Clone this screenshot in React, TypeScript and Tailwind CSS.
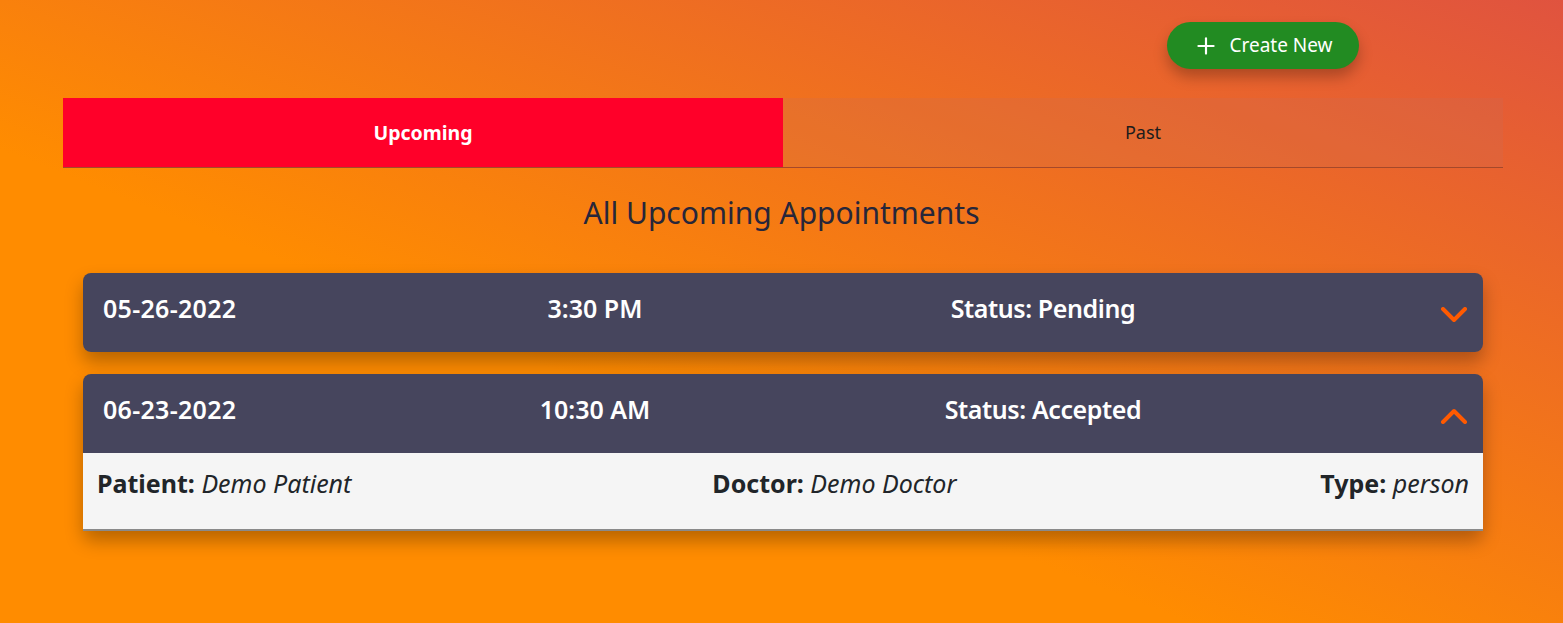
import { Plus } from "lucide-react";

type Appt = {
  date: string;
  time: string;
  status: string;
  open: boolean;
};

const appts: Appt[] = [
  { date: "05-26-2022", time: "3:30 PM", status: "Pending", open: false },
  { date: "06-23-2022", time: "10:30 AM", status: "Accepted", open: true },
];

const Chevron = ({ up }: { up: boolean }) => (
  <svg width="28" height="16" viewBox="0 0 28 16" fill="none">
    <path
      d={up ? "M3 14 L14 3 L25 14" : "M3 2 L14 13 L25 2"}
      stroke="#ff5a00"
      strokeWidth="4"
      strokeLinecap="round"
      strokeLinejoin="round"
    />
  </svg>
);

const ApptCard = ({ appt }: { appt: Appt }) => (
  <div className="rounded-lg shadow-[0_10px_18px_rgba(0,0,0,0.28)]">
    <div
      className={`grid h-[79px] grid-cols-[328px_328px_568px_1fr] items-center bg-[#46455d] pb-2 pl-5 text-[25px] font-semibold text-white ${
        appt.open ? "rounded-t-lg" : "rounded-lg"
      }`}
    >
      <div className="tracking-[0.3px]">{appt.date}</div>
      <div className="text-center">{appt.time}</div>
      <div className="text-center tracking-[-0.4px]">Status: {appt.status}</div>
      <div className="flex justify-end pr-[15px] pt-3">
        <Chevron up={appt.open} />
      </div>
    </div>
    {appt.open && (
      <div className="grid h-[78px] grid-cols-3 items-start border-b-2 border-[#8a8a8a] bg-[#f5f5f5] px-[14px] pt-[12px] text-[25px] text-[#212529]">
        <div>
          <span className="font-bold">Patient:</span> <i>Demo Patient</i>
        </div>
        <div className="pl-[158px]">
          <span className="font-bold">Doctor:</span> <i>Demo Doctor</i>
        </div>
        <div className="text-right">
          <span className="font-bold">Type:</span> <i>person</i>
        </div>
      </div>
    )}
  </div>
);

export default function App() {
  return (
    <div className="h-[623px] w-full overflow-hidden bg-[linear-gradient(to_top_right,#ff8c00_38%,#e0533f_100%)] font-['Noto_Sans',sans-serif]">
      <div className="flex justify-end pr-[204px] pt-[22px]">
        <button className="flex h-[47px] w-[192px] items-center justify-center gap-[10px] rounded-full bg-[#228b22] text-[19px] text-white shadow-[0_8px_14px_rgba(0,0,0,0.25)]">
          <Plus size={26} strokeWidth={2} />
          <span>Create New</span>
        </button>
      </div>

      <div className="ml-[63px] mt-[29px] grid h-[70px] w-[1440px] grid-cols-2 border-b border-[#a5482a]">
        <div className="flex items-center justify-center bg-[#ff0029] text-[19.5px] font-bold text-white">
          Upcoming
        </div>
        <div className="flex items-center justify-center bg-[rgba(200,110,90,0.22)] text-[18px] text-[#1c1c1c]">
          Past
        </div>
      </div>

      <h2 className="mt-[22px] text-center text-[30px] text-[#27263a]">All Upcoming Appointments</h2>

      <div className="ml-[83px] mt-[38px] flex w-[1400px] flex-col gap-[22px]">
        {appts.map((a) => (
          <ApptCard key={a.date} appt={a} />
        ))}
      </div>
    </div>
  );
}
